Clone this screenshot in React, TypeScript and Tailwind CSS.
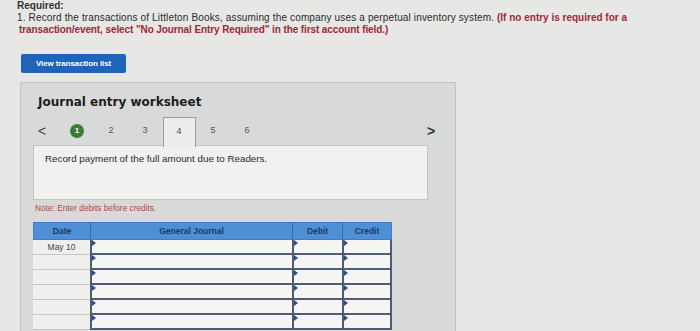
const steps = ["1", "2", "3", "4", "5", "6"];
const rows = ["May 10", "", "", "", "", ""];

function Marker() {
  return (
    <span className="absolute left-0 top-0 w-0 h-0 border-t-[3px] border-b-[3px] border-l-[4px] border-t-transparent border-b-transparent border-l-[#2d4f86]" />
  );
}

export default function App() {
  return (
    <div
      className="w-[700px] h-[331px] overflow-hidden bg-[#e7e7e5] flex flex-col text-[#2b2b2b]"
      style={{ fontFamily: '"Liberation Sans", Arial, sans-serif' }}
    >
      <div className="pl-[17px] text-[10px] leading-[12px]">
        <div className="font-bold text-[#333]">Required:</div>
        <div>
          <span className="tracking-[0.15px]">
            1. Record the transactions of Littleton Books, assuming the company uses a perpetual inventory system.
          </span>{" "}
          <span className="font-bold text-[#a3263a]">(If no entry is required for a</span>
        </div>
        <div className="pl-[2px] font-bold text-[#a3263a] tracking-[-0.1px]">
          transaction/event, select "No Journal Entry Required" in the first account field.)
        </div>
      </div>

      <button className="ml-[21px] mt-[18px] w-[105px] h-[19px] rounded-[2px] bg-[#2064ba] text-white text-[8px] font-bold tracking-[-0.1px] text-center">
        View transaction list
      </button>

      <div className="ml-[20px] mt-[9px] w-[436px] flex-1 bg-[#d8dada] border border-b-0 border-[#c3c5c5]">
        <div
          className="pl-[17px] pt-[11px] text-[12px] leading-[16px] font-bold text-[#1e1e1e]"
          style={{ fontFamily: '"DejaVu Sans", Verdana, sans-serif' }}
        >
          Journal entry worksheet
        </div>

        <div className="flex items-center h-[30px] mt-[6px] pl-[13px] pr-[16px]">
          <span className="w-[16px] text-center text-[14px] text-[#444]">&lt;</span>
          <div className="flex ml-[10px] h-full">
            {steps.map((s) => (
              <div key={s} className="w-[34px] h-full flex items-center justify-center">
                {s === "1" ? (
                  <span className="w-[14px] h-[14px] rounded-full bg-[#3b7d35] text-white text-[8px] font-bold flex items-center justify-center">
                    1
                  </span>
                ) : s === "4" ? (
                  <span className="w-[33px] h-[30px] mt-[1px] border border-b-0 border-[#9c9c9c] bg-[#ececec] flex items-center justify-center text-[9px] text-[#444]">
                    4
                  </span>
                ) : (
                  <span className="text-[9px] text-[#555]">{s}</span>
                )}
              </div>
            ))}
          </div>
          <span className="ml-auto w-[16px] text-center text-[14px] font-bold text-[#333]">&gt;</span>
        </div>

        <div className="ml-[12px] -mt-px w-[395px] h-[55px] bg-[#f1f1f0] border border-[#c4c4c4] pl-[11px] pt-[7px] text-[9.8px] leading-[12px] text-[#2a2a2a]">
          Record payment of the full amount due to Readers.
        </div>

        <div className="ml-[14px] mt-[4px] text-[8.3px] leading-[9px] text-[#b2483c]">
          Note: Enter debits before credits.
        </div>

        <div className="ml-[12px] mt-[9px] w-[359px]">
          <div className="flex h-[18px] bg-[#4f8fd6] text-[8.5px] font-bold text-[#173a6c] border border-[#3f7cc4]">
            <div className="w-[57px] flex items-center justify-center border-r border-[#2f6cb6]">Date</div>
            <div className="w-[202px] flex items-center justify-center border-r border-[#2f6cb6]">General Journal</div>
            <div className="w-[50px] flex items-center justify-center border-r border-[#2f6cb6]">Debit</div>
            <div className="flex-1 flex items-center justify-center">Credit</div>
          </div>
          {rows.map((d, i) => (
            <div key={i} className="flex h-[15px]">
              <div className="w-[57px] bg-[#efefee] border-b border-[#c6c6c6] text-[8.5px] text-[#444] flex items-center justify-center">
                {d}
              </div>
              <div className="relative w-[202px] bg-[#f5f5f4] border-l-2 border-b-2 border-[#4f5c74]">
                <Marker />
              </div>
              <div className="relative w-[50px] bg-[#f5f5f4] border-l-2 border-b-2 border-[#4f5c74]">
                <Marker />
              </div>
              <div className="relative flex-1 bg-[#f5f5f4] border-l-2 border-r-2 border-b-2 border-[#4f5c74]">
                <Marker />
              </div>
            </div>
          ))}
        </div>
      </div>
    </div>
  );
}
